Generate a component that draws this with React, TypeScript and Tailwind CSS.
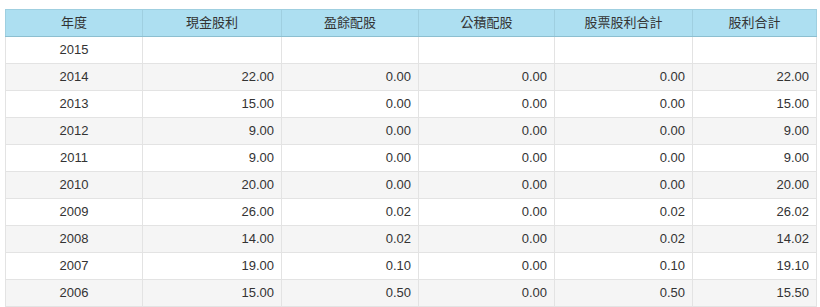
const headers = ["年度", "現金股利", "盈餘配股", "公積配股", "股票股利合計", "股利合計"];
const widths = ["w-[137px]", "w-[139px]", "w-[137px]", "w-[136px]", "w-[138px]", "w-[124px]"];

const rows: [string, string[]][] = [
  ["2015", ["", "", "", "", ""]],
  ["2014", ["22.00", "0.00", "0.00", "0.00", "22.00"]],
  ["2013", ["15.00", "0.00", "0.00", "0.00", "15.00"]],
  ["2012", ["9.00", "0.00", "0.00", "0.00", "9.00"]],
  ["2011", ["9.00", "0.00", "0.00", "0.00", "9.00"]],
  ["2010", ["20.00", "0.00", "0.00", "0.00", "20.00"]],
  ["2009", ["26.00", "0.02", "0.00", "0.02", "26.02"]],
  ["2008", ["14.00", "0.02", "0.00", "0.02", "14.02"]],
  ["2007", ["19.00", "0.10", "0.00", "0.10", "19.10"]],
  ["2006", ["15.00", "0.50", "0.00", "0.50", "15.50"]],
];

export default function App() {
  return (
    <div
      className="h-[307px] w-[820px] bg-white pl-[5px] pt-[9px] text-[13px] text-[#333]"
      style={{ fontFamily: '"Liberation Sans", Arial, "Noto Sans CJK TC", sans-serif' }}
    >
      <table className="w-[811px] table-fixed border-collapse">
        <thead>
          <tr className="h-[27px] bg-[#addff1]">
            {headers.map((h, i) => (
              <th
                key={h}
                className={`${widths[i]} border border-[#9fcfe0] border-b-[#8cbfd0] font-normal text-center`}
              >
                {h}
              </th>
            ))}
          </tr>
        </thead>
        <tbody>
          {rows.map(([year, vals], idx) => (
            <tr key={year} className={`h-[27px] ${idx % 2 === 1 ? "bg-[#f5f5f5]" : "bg-white"}`}>
              <td className="border border-[#e3e3e3] text-center">{year}</td>
              {vals.map((v, i) => (
                <td key={i} className="border border-[#e3e3e3] pr-[7px] text-right">
                  {v}
                </td>
              ))}
            </tr>
          ))}
        </tbody>
      </table>
    </div>
  );
}
